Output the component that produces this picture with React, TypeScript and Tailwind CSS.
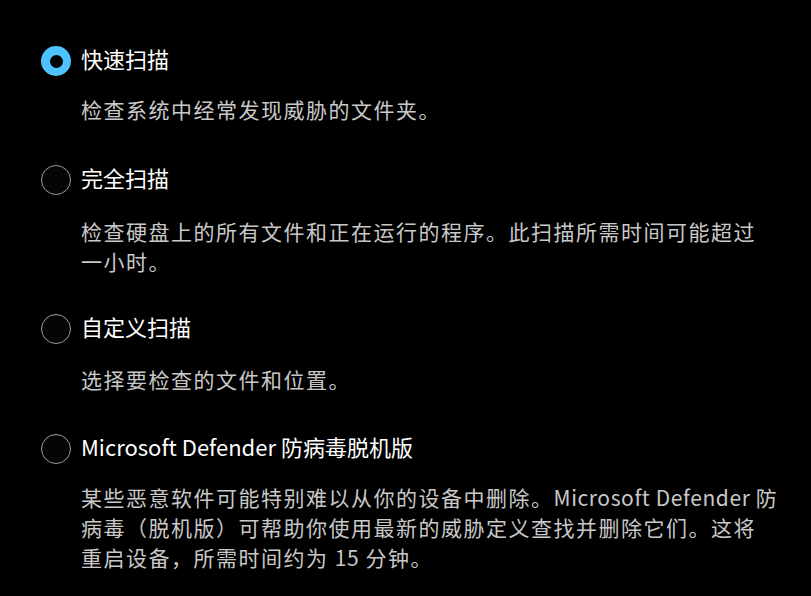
import React from "react";

const font = { fontFamily: '"Noto Sans CJK SC", "Noto Sans", sans-serif' };

function Radio({ checked }: { checked?: boolean }) {
  if (checked) {
    return (
      <div className="w-[30px] h-[30px] rounded-full bg-[#4cc2ff] flex items-center justify-center shrink-0">
        <div className="w-[13px] h-[13px] rounded-full bg-black" />
      </div>
    );
  }
  return (
    <div className="w-[30px] h-[30px] rounded-full border-[1.5px] border-[#9c9c9c] bg-[#050505] shrink-0" />
  );
}

function Option({
  checked,
  label,
  children,
  descMt,
  mb,
}: {
  checked?: boolean;
  label: React.ReactNode;
  children: React.ReactNode;
  descMt: string;
  mb: string;
}) {
  return (
    <div className={mb}>
      <div className="flex items-center h-[30px] gap-[10px]">
        <Radio checked={checked} />
        <div className="text-[22px] leading-[30px] mb-[6px] text-white whitespace-nowrap">{label}</div>
      </div>
      <div
        className={`${descMt} pl-[40px] text-[21px] leading-[30px] tracking-[1.5px] text-[#c8c8c8] whitespace-nowrap`}
      >
        {children}
      </div>
    </div>
  );
}

export default function App() {
  return (
    <div className="w-[811px] h-[596px] bg-black overflow-hidden pl-[41px] pt-[46px]" style={font}>
      <Option checked label="快速扫描" descMt="mt-[18px]" mb="mb-[41px]">
        检查系统中经常发现威胁的文件夹。
      </Option>
      <Option label="完全扫描" descMt="mt-[21px]" mb="mb-[38px]">
        检查硬盘上的所有文件和正在运行的程序。此扫描所需时间可能超过
        <br />
        一小时。
      </Option>
      <Option label="自定义扫描" descMt="mt-[20px]" mb="mb-[40px]">
        选择要检查的文件和位置。
      </Option>
      <Option label="Microsoft Defender 防病毒脱机版" descMt="mt-[18px]" mb="">
        某些恶意软件可能特别难以从你的设备中删除。
        <span className="tracking-[0.6px]">Microsoft Defender </span>防
        <br />
        病毒（脱机版）可帮助你使用最新的威胁定义查找并删除它们。这将
        <br />
        重启设备，所需时间约为 <span className="tracking-[0.6px]">15</span> 分钟。
      </Option>
    </div>
  );
}
